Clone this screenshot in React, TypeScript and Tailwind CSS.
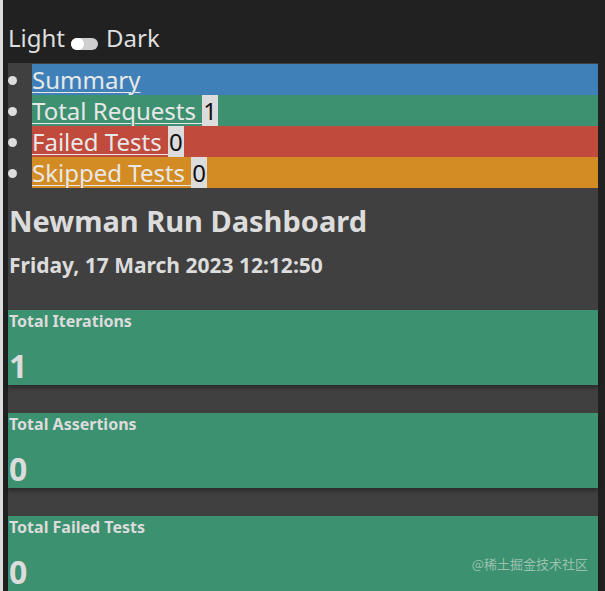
import React from "react";

const links = [
  { label: "Summary", count: null, bg: "bg-[#3f80b8]" },
  { label: "Total Requests ", count: "1", bg: "bg-[#3d9170]" },
  { label: "Failed Tests ", count: "0", bg: "bg-[#c04a3c]" },
  { label: "Skipped Tests ", count: "0", bg: "bg-[#d38b23]" },
];

const cards = [
  { label: "Total Iterations", value: "1" },
  { label: "Total Assertions", value: "0" },
  { label: "Total Failed Tests", value: "0" },
];

export default function App() {
  return (
    <div className="relative h-[591px] overflow-hidden bg-[#212121] border-l-[3px] border-[#dcdcdc] pl-[5px] pr-[7px] font-['Noto_Sans','Liberation_Sans',sans-serif] text-[#dedede]">
      <div className="flex h-[63px] items-start pt-[26px] text-[24px] leading-none">
        <span>Light</span>
        <span className="ml-[6px] mr-[8px] mt-[12px] flex h-[12px] w-[27px] rounded-full bg-[#cfcfcf]">
          <span className="h-[12px] w-[13px] rounded-full bg-white" />
        </span>
        <span>Dark</span>
      </div>

      <div className="h-full bg-[#404040]">
        <ul className="list-disc pl-[24px] pt-[1px] text-[24px] marker:text-[#dedede]">
          {links.map((l) => (
            <li key={l.label} className={`${l.bg} h-[31px] leading-[31px]`}>
              <a href="#" className="text-[#e8e8e8] underline decoration-1 underline-offset-[3px]">
                {l.label}
              </a>
              {l.count && (
                <span className="inline-block h-[31px] bg-[#dcdcdc] px-[1px] align-top text-[#111]">{l.count}</span>
              )}
            </li>
          ))}
        </ul>

        <h1 className="mt-[14px] pl-[1px] text-[29px] font-bold leading-[38px] text-[#dcdcdc]">Newman Run Dashboard</h1>
        <h3 className="mt-[12px] pl-[1px] text-[21px] font-bold leading-[26px] text-[#dcdcdc]">Friday, 17 March 2023 12:12:50</h3>

        <div className="mt-[32px] flex flex-col gap-[28px]">
          {cards.map((c) => (
            <div key={c.label} className="h-[75px] bg-[#3c9170] shadow-[0_3px_4px_rgba(0,0,0,0.35)]">
              <div className="pl-[1px] pt-[1px] text-[16px] font-bold leading-[20px] text-[#dcdcdc]">{c.label}</div>
              <div className="mt-[17px] pl-[1px] text-[32px] font-bold leading-[36px] text-[#dcdcdc]">{c.value}</div>
            </div>
          ))}
        </div>
      </div>

      <div className="absolute bottom-[18px] right-[17px] font-['Noto_Sans_CJK_SC',sans-serif] text-[13px] text-[#b5cfc3]/80">
        @稀土掘金技术社区
      </div>
    </div>
  );
}
